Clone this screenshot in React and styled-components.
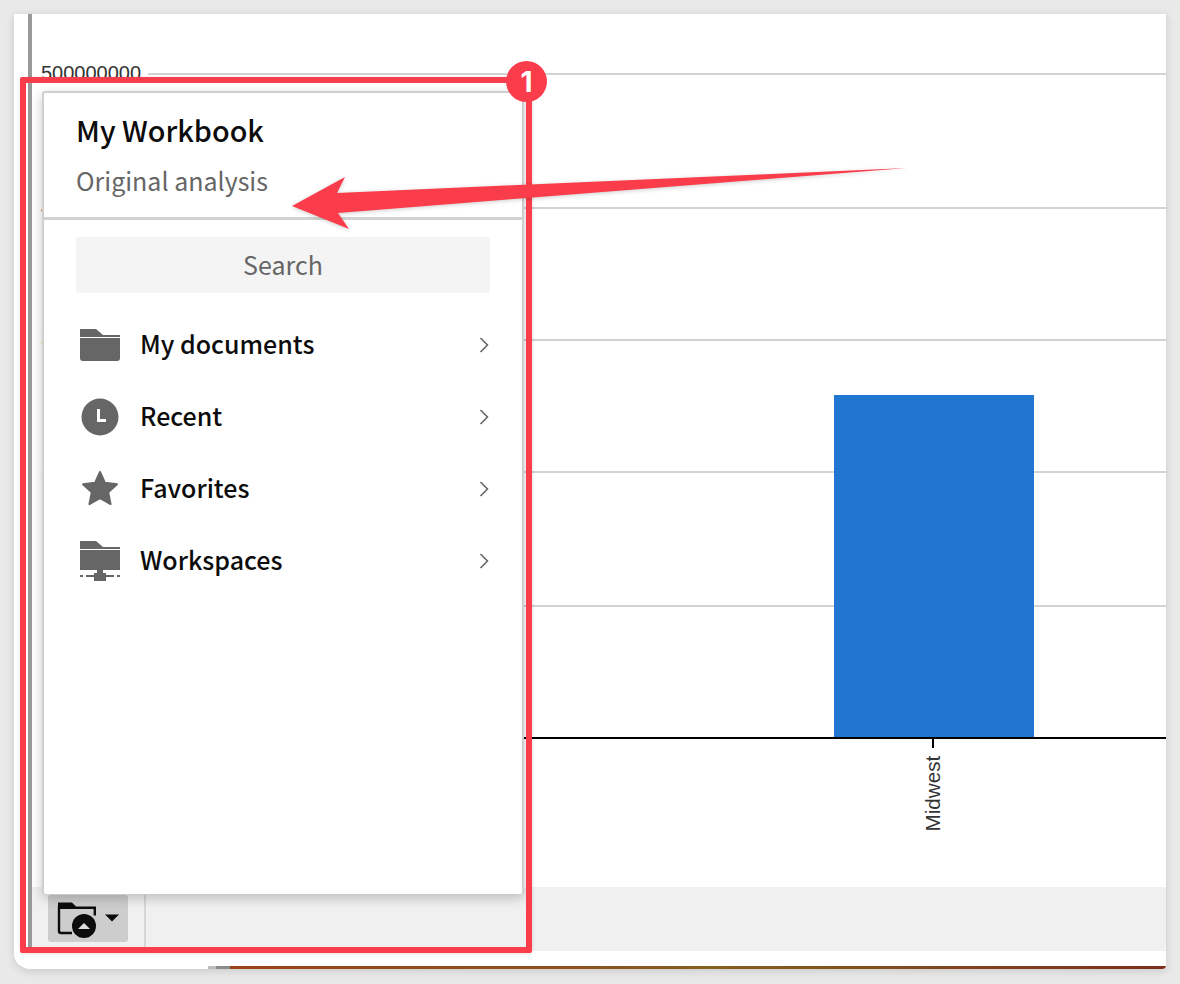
import React from "react";
import styled, { createGlobalStyle } from "styled-components";

const Global = createGlobalStyle`
  html, body { margin: 0; padding: 0; background: #e9e9e9; }
  body { font-family: "Noto Sans CJK SC", "Noto Sans", sans-serif; }
`;

const Page = styled.div`
  position: relative;
  width: 1180px;
  height: 984px;
  padding: 14px 14px 0;
  box-sizing: border-box;
  overflow: hidden;
  background: #e9e9e9;
`;

const Window = styled.div`
  width: 1152px;
  height: 955px;
  display: flex;
  flex-direction: column;
  background: #fff;
  border-radius: 0 0 4px 16px;
  box-shadow: 0 2px 8px rgba(0, 0, 0, 0.14);
  overflow: hidden;
`;

const Main = styled.div`
  flex: 1;
  min-height: 0;
  margin-left: 14px;
  border-left: 4px solid #999;
  display: flex;
  flex-direction: column;
`;

const ChartArea = styled.div`
  flex: 1;
  min-height: 0;
`;

const ChartSvg = styled.svg`
  display: block;
  width: 100%;
  height: 100%;
`;

const Toolbar = styled.div`
  height: 64px;
  flex: none;
  display: flex;
  align-items: stretch;
  padding: 8px 0 0 16px;
  box-sizing: border-box;
  background: #f0f0f0;
`;

const SourceButton = styled.div`
  width: 80px;
  height: 47px;
  display: flex;
  align-items: center;
  padding-left: 9px;
  box-sizing: border-box;
  background: #cdcdcd;
  border-radius: 3px;
`;

const ToolbarDivider = styled.div`
  width: 2px;
  margin-left: 16px;
  background: #d6d6d6;
`;

const BottomStrip = styled.div`
  height: 15px;
  flex: none;
  background: #fff;
`;

const ColorLine = styled.div`
  height: 3px;
  flex: none;
  margin-left: 194px;
  background: linear-gradient(
    90deg,
    #bdbdbd 0,
    #bdbdbd 8px,
    #8b8b8b 8px,
    #8b8b8b 22px,
    #9c431c 22px,
    #8a5622 45%,
    #84621f 52%,
    #7f2e1d 100%
  );
`;

const Menu = styled.div`
  position: absolute;
  left: 42px;
  top: 91px;
  width: 482px;
  height: 803px;
  box-sizing: border-box;
  display: flex;
  flex-direction: column;
  background: #fff;
  border: 2px solid #cfcfcf;
  border-bottom-width: 0;
  border-radius: 3px;
  box-shadow: 0 4px 12px rgba(0, 0, 0, 0.22);
`;

const MenuHeader = styled.div`
  height: 127px;
  flex: none;
  box-sizing: border-box;
  padding: 16px 32px 0;
  border-bottom: 3px solid #d2d2d2;
`;

const Title = styled.div`
  font-size: 28.8px;
  line-height: 42px;
  font-weight: 500;
  color: #0c0c0c;
`;

const Subtitle = styled.div`
  margin-top: 9px;
  font-size: 25px;
  line-height: 40px;
  color: #666;
`;

const MenuBody = styled.div`
  padding: 17px 32px 0;
`;

const Search = styled.div`
  height: 56px;
  width: 414px;
  padding-bottom: 2px;
  box-sizing: border-box;
  display: flex;
  align-items: center;
  justify-content: center;
  background: #f4f4f4;
  border-radius: 3px;
  font-size: 25px;
  color: #666;
`;

const List = styled.div`
  margin-top: 16px;
  display: flex;
  flex-direction: column;
`;

const Row = styled.div`
  height: 72px;
  display: flex;
  align-items: center;
`;

const IconSlot = styled.div`
  width: 48px;
  height: 44px;
  flex: none;
  display: flex;
  align-items: center;
  justify-content: center;
  margin-right: 17px;
`;

const RowLabel = styled.div`
  flex: 1;
  font-size: 25px;
  line-height: 36px;
  padding-bottom: 5px;
  margin-left: -1px;
  font-weight: 500;
  color: #0c0c0c;
`;

const Chevron = styled.svg`
  display: block;
  margin-right: 1px;
`;

const Frame = styled.div`
  position: absolute;
  left: 20px;
  top: 77px;
  width: 512px;
  height: 876px;
  box-sizing: border-box;
  border: 6px solid #fb3c4b;
  border-radius: 2px;
  box-shadow: 0 1px 4px rgba(0, 0, 0, 0.12);
`;

const Badge = styled.div`
  position: absolute;
  left: 506px;
  top: 61px;
  width: 41px;
  height: 41px;
  border-radius: 50%;
  background: #fb3c4b;
  color: #fff;
  display: flex;
  align-items: center;
  justify-content: center;
  font-family: Inter, "Liberation Sans", sans-serif;
  font-size: 28px;
  font-weight: 700;
  line-height: 1;
`;

const ArrowSvg = styled.svg`
  position: absolute;
  left: 0;
  top: 0;
  pointer-events: none;
  filter: drop-shadow(0 1px 2px rgba(0, 0, 0, 0.2));
`;

const FolderIcon = () => (
  <svg width="40" height="32" viewBox="0 0 40 32">
    <path d="M0 0h16l7 6h17v2H0z" fill="#666" />
    <path d="M0 9h40v20a3 3 0 0 1-3 3H3a3 3 0 0 1-3-3z" fill="#666" />
  </svg>
);

const ClockIcon = () => (
  <svg width="38" height="38" viewBox="0 0 38 38">
    <circle cx="19" cy="19" r="18.5" fill="#666" />
    <path d="M17.5 11v11.5H25" fill="none" stroke="#fff" strokeWidth="3" />
  </svg>
);

const StarIcon = () => (
  <svg width="38" height="38" viewBox="0 0 38 38">
    <path
      d="M19 2l5 10.8 12 1.5-8.8 8 2.4 11.8L19 28.2 8.4 34.1l2.4-11.8-8.8-8 12-1.5z"
      fill="#666"
      stroke="#666"
      strokeWidth="2"
      strokeLinejoin="round"
    />
  </svg>
);

const WorkspaceIcon = () => (
  <svg width="40" height="40" viewBox="0 0 40 40">
    <path d="M0 0h16l7 6h17v2H0z" fill="#666" />
    <path d="M0 9h40v20H0z" fill="#666" />
    <path d="M17 29h6v3h3v8H14v-8h3z" fill="#666" />
    <path d="M0 35h3M6 35h8M26 35h8M37 35h3" stroke="#666" strokeWidth="2" fill="none" />
  </svg>
);

const RowChevron = () => (
  <Chevron width="10" height="16" viewBox="0 0 10 16">
    <path d="M1.5 1l7 7-7 7" fill="none" stroke="#666" strokeWidth="1.6" />
  </Chevron>
);

const SourceIcon = () => (
  <svg width="62" height="38" viewBox="0 0 62 38">
    <path d="M2 6v25a2 2 0 0 0 2 2h11" fill="none" stroke="#0c0c0c" strokeWidth="2.4" />
    <path d="M1 2.5h14l4 4h20v9h-2.4V9H1z" fill="#0c0c0c" />
    <circle cx="27" cy="26" r="12" fill="#0c0c0c" />
    <path d="M21 29l6-6 6 6z" fill="#ddd" />
    <path d="M48 14.5h14l-7 7z" fill="#0c0c0c" />
  </svg>
);

const rows = [
  { label: "My documents", icon: <FolderIcon /> },
  { label: "Recent", icon: <ClockIcon /> },
  { label: "Favorites", icon: <StarIcon /> },
  { label: "Workspaces", icon: <WorkspaceIcon /> },
];

const grid = [60, 194, 326, 458, 592];
const yLabels = ["500000000", "400000000", "300000000", "200000000", "100000000"];

const Chart = () => (
  <ChartSvg viewBox="32 14 1134 873">
    {grid.map((y, i) => (
      <g key={y}>
        <rect x="148" y={y + 13} width="1018" height="2" fill="#d3d3d3" />
        <text
          x="41"
          y={y + 20}
          fontFamily="Liberation Sans, Arial, sans-serif"
          fontSize="20"
          fill="#333"
        >
          {yLabels[i]}
        </text>
      </g>
    ))}
    <rect x="834" y="395" width="200" height="343" fill="#2176d2" />
    <rect x="148" y="737" width="1018" height="2" fill="#000" />
    <rect x="932" y="738" width="2" height="10" fill="#000" />
    <text
      transform="translate(940 831.5) rotate(-90)"
      fontFamily="Liberation Sans, Arial, sans-serif"
      fontSize="20.7"
      fill="#333"
    >
      Midwest
    </text>
  </ChartSvg>
);

export default function App() {
  return (
    <Page>
      <Global />
      <Window>
        <Main>
          <ChartArea>
            <Chart />
          </ChartArea>
          <Toolbar>
            <SourceButton>
              <SourceIcon />
            </SourceButton>
            <ToolbarDivider />
          </Toolbar>
        </Main>
        <BottomStrip />
        <ColorLine />
      </Window>
      <Menu>
        <MenuHeader>
          <Title>My Workbook</Title>
          <Subtitle>Original analysis</Subtitle>
        </MenuHeader>
        <MenuBody>
          <Search>Search</Search>
          <List>
            {rows.map((r) => (
              <Row key={r.label}>
                <IconSlot>{r.icon}</IconSlot>
                <RowLabel>{r.label}</RowLabel>
                <RowChevron />
              </Row>
            ))}
          </List>
        </MenuBody>
      </Menu>
      <Frame />
      <Badge>1</Badge>
      <ArrowSvg width="1180" height="984" viewBox="0 0 1180 984">
        <path d="M292 206L345 177 337 193 907 168 338 213 349 229z" fill="#fb3c4b" />
      </ArrowSvg>
    </Page>
  );
}
